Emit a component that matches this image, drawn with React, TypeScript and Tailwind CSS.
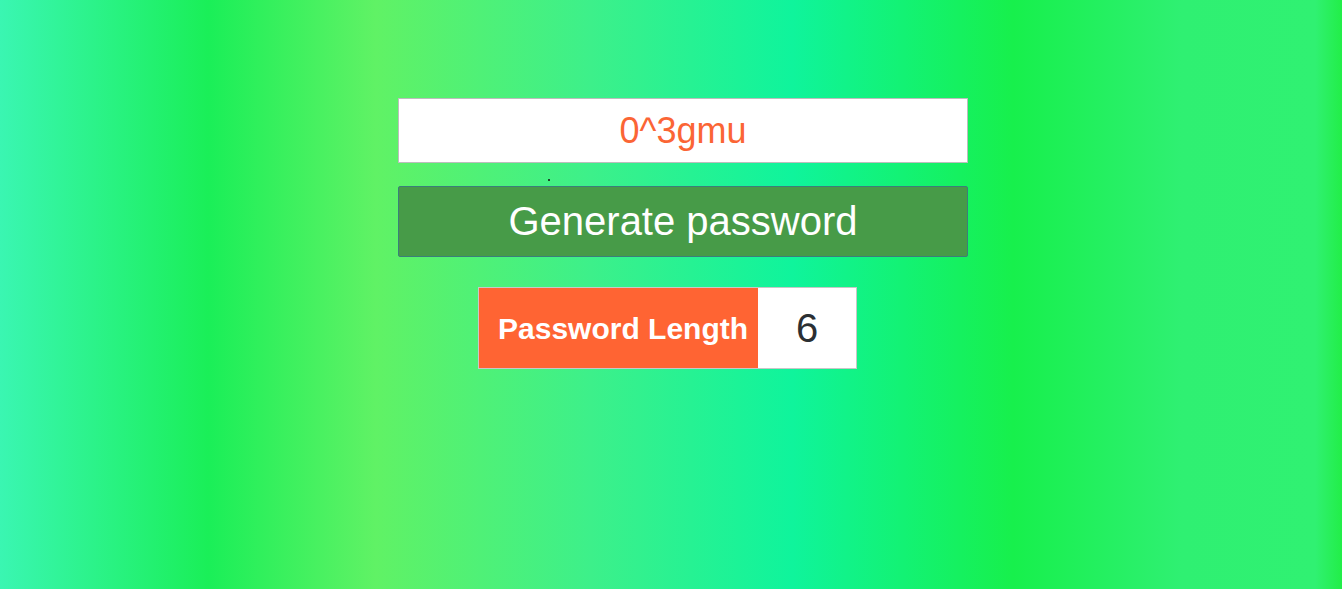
import { useState } from "react";

function App() {
  const [password] = useState("0^3gmu");
  const [length, setLength] = useState("6");

  return (
    <div className="w-full h-[589px] bg-[linear-gradient(90deg,#3af6b2_0%,#1aef58_15.5%,#60f265_28%,#3df08a_44%,#0ff49c_59%,#17f04c_75.5%,#2ff072_88%,#30f172_98%,#22ee48_100%)] flex flex-col items-center pt-[98px] font-['Liberation_Sans',Arial,sans-serif]">
      <div className="ml-[24px] w-[570px] h-[65px] bg-white border border-[#bdbdbd] flex items-center justify-center text-[36px] text-[#fb6535]">
        {password}
      </div>

      <div className="ml-[24px] w-[570px] h-[23px] pt-[16px] pl-[150px]">
        <div className="w-[2px] h-[2px] bg-[#1d4a2a]"></div>
      </div>

      <button className="ml-[24px] w-[570px] h-[71px] bg-[#479b48] border border-[#3b7f7a] rounded-[2px] text-white text-[40px] leading-none flex items-center justify-center pb-[2px]">
        Generate password
      </button>

      <div className="mr-[7px] flex mt-[30px] h-[82px] border border-[#c7c7c7]">
        <label className="w-[279px] bg-[#ff6433] text-white font-bold text-[30px] flex items-center pl-[19px]">
          Password Length
        </label>
        <input
          type="text"
          value={length}
          onChange={(e) => setLength(e.target.value)}
          className="w-[98px] bg-white text-center text-[40px] text-[#2b2f33] outline-none"
        />
      </div>
    </div>
  );
}

export default App;
